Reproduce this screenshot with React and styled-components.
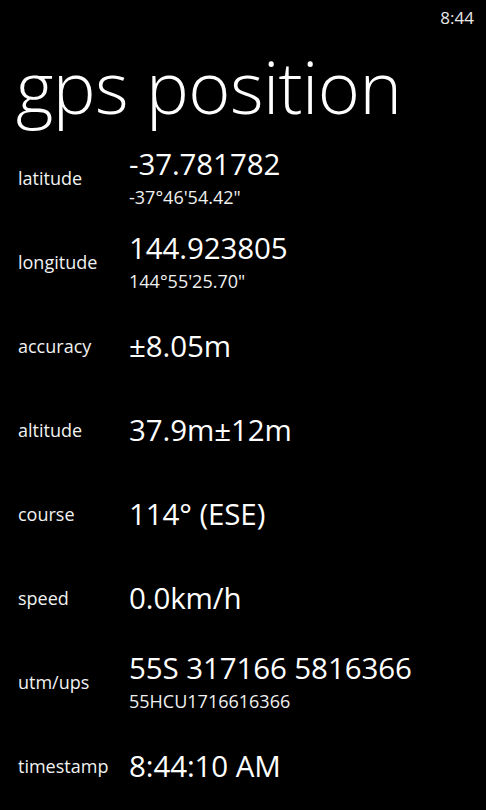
import React from "react";
import styled, { createGlobalStyle } from "styled-components";

const GlobalStyle = createGlobalStyle`
  html, body {
    margin: 0;
    padding: 0;
    background: #000;
  }
  body {
    font-family: "Open Sans", "Noto Sans", sans-serif;
    color: #fff;
  }
`;

const Screen = styled.div`
  width: 486px;
  height: 810px;
  background: #000;
  overflow: hidden;
  display: flex;
  flex-direction: column;
`;

const StatusBar = styled.div`
  height: 34px;
  display: flex;
  justify-content: flex-end;
  align-items: center;
  padding-right: 12px;
  font-size: 17px;
  color: #e8e8e8;
`;

const Title = styled.h1`
  margin: 0;
  padding: 2px 0 0 16px;
  height: 100px;
  font-size: 72px;
  font-weight: 300;
  line-height: 100px;
  letter-spacing: -0.6px;
  white-space: nowrap;
`;

const List = styled.div`
  display: flex;
  flex-direction: column;
`;

const Row = styled.div`
  height: 84px;
  display: grid;
  grid-template-columns: 111px 1fr;
  align-items: center;
  padding-left: 18px;
`;

const Label = styled.div`
  font-size: 18px;
  color: #f2f2f2;
`;

const ValueBlock = styled.div`
  display: flex;
  flex-direction: column;
`;

const Main = styled.div`
  font-size: 29.5px;
  line-height: 32px;
  letter-spacing: -0.1px;
  white-space: nowrap;
`;

const Sub = styled.div`
  margin-top: 5px;
  font-size: 18px;
  line-height: 24px;
  color: #f0f0f0;
`;

const rows = [
  { label: "latitude", main: "-37.781782", sub: "-37°46'54.42\"" },
  { label: "longitude", main: "144.923805", sub: "144°55'25.70\"" },
  { label: "accuracy", main: "±8.05m" },
  { label: "altitude", main: "37.9m±12m" },
  { label: "course", main: "114° (ESE)" },
  { label: "speed", main: "0.0km/h" },
  { label: "utm/ups", main: "55S 317166 5816366", sub: "55HCU1716616366" },
  { label: "timestamp", main: "8:44:10 AM" },
];

export default function App() {
  return (
    <Screen>
      <GlobalStyle />
      <StatusBar>8:44</StatusBar>
      <Title>gps position</Title>
      <List>
        {rows.map((r) => (
          <Row key={r.label}>
            <Label>{r.label}</Label>
            <ValueBlock>
              <Main>{r.main}</Main>
              {r.sub && <Sub>{r.sub}</Sub>}
            </ValueBlock>
          </Row>
        ))}
      </List>
    </Screen>
  );
}
